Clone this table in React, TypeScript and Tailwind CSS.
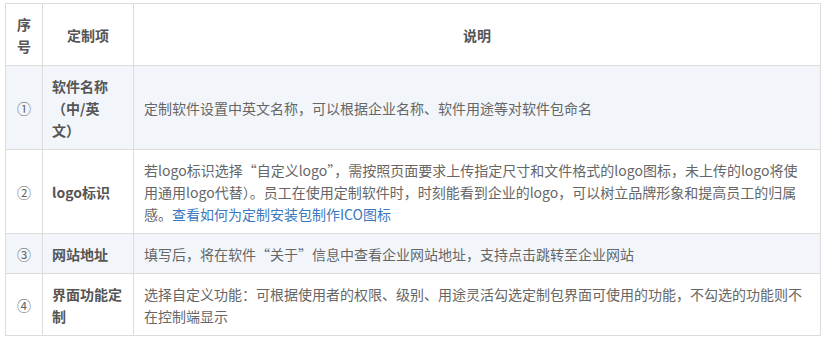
import React from 'react';

type Row = {
	no: string;
	name: React.ReactNode;
	desc: React.ReactNode;
	striped: boolean;
};

const ROWS: Row[] = [
	{
		no: '①',
		name: (
			<>
				软件名称
				<br />
				（中/英
				<br />
				文）
			</>
		),
		desc: '定制软件设置中英文名称，可以根据企业名称、软件用途等对软件包命名',
		striped: true,
	},
	{
		no: '②',
		name: 'logo标识',
		desc: (
			<>
				若logo标识选择“自定义logo”，需按照页面要求上传指定尺寸和文件格式的logo图标，未上传的logo将使用通用logo代替）。员工在使用定制软件时，时刻能看到企业的logo，可以树立品牌形象和提高员工的归属感。
				<a className="text-[#3b78c0]">查看如何为定制安装包制作ICO图标</a>
			</>
		),
		striped: false,
	},
	{
		no: '③',
		name: '网站地址',
		desc: '填写后，将在软件“关于”信息中查看企业网站地址，支持点击跳转至企业网站',
		striped: true,
	},
	{
		no: '④',
		name: '界面功能定制',
		desc: '选择自定义功能：可根据使用者的权限、级别、用途灵活勾选定制包界面可使用的功能，不勾选的功能则不在控制端显示',
		striped: false,
	},
];

const cell = 'border border-[#dcdcdc] pt-[9px] pb-[8px] align-middle';

export default function App() {
	return (
		<div
			className="h-[341px] w-[832px] bg-white pl-[5px] pt-[3px] text-[14px] leading-[22px] text-[#666]"
			style={{ fontFamily: '"Noto Sans CJK SC", "Noto Sans", sans-serif' }}
		>
			<table className="w-[816px] table-fixed border-collapse">
				<colgroup>
					<col className="w-[37px]" />
					<col className="w-[91px]" />
					<col />
				</colgroup>
				<thead>
					<tr className="bg-white font-bold text-[#555]">
						<th className={`${cell} px-[9px] text-center`}>序号</th>
						<th className={`${cell} px-[9px] text-center`}>定制项</th>
						<th className={`${cell} px-[9px] text-center`}>说明</th>
					</tr>
				</thead>
				<tbody>
					{ROWS.map((row) => (
						<tr key={row.no} className={row.striped ? 'bg-[#f2f6fb]' : 'bg-white'}>
							<td className={`${cell} px-[9px] text-center`}>{row.no}</td>
							<td className={`${cell} pl-[9px] pr-[11px] font-bold text-[#555]`}>{row.name}</td>
							<td className={`${cell} pl-[10px] pr-[9px]`}>{row.desc}</td>
						</tr>
					))}
				</tbody>
			</table>
		</div>
	);
}
